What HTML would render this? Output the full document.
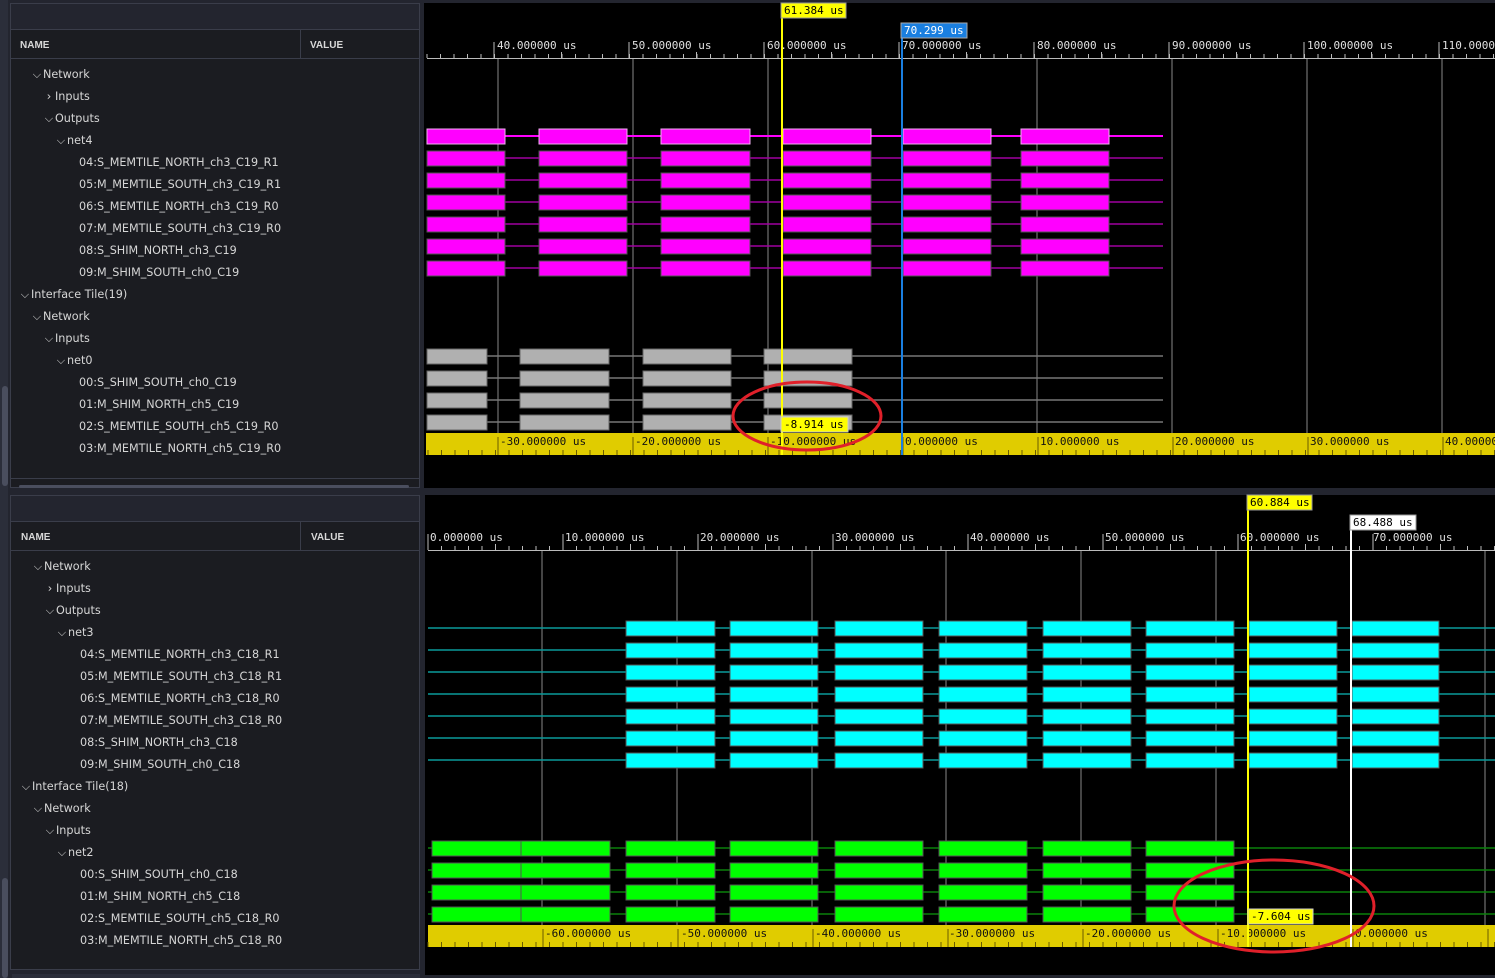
<!DOCTYPE html>
<html><head><meta charset="utf-8"><style>
body{margin:0;width:1495px;height:978px;background:#23252f;overflow:hidden;position:relative;font-family:"Liberation Sans","DejaVu Sans",sans-serif}
.lp{position:absolute;left:10px;width:410px;background:#1b1c21;border:1px solid #3a3d4a;box-sizing:border-box}
.hdr{position:absolute;left:10px;width:410px;height:30px;background:#1b1c21;border:1px solid #3a3d4a;box-sizing:border-box;font-size:10px;color:#d8d8d8;font-weight:bold}
.hdr span{position:absolute;top:10px}
.hdr i{position:absolute;left:289px;top:0;bottom:0;border-left:1px solid #3a3d4a}
.t{position:absolute;font-size:11.2px;color:#d6d6d6;white-space:nowrap;font-family:"DejaVu Sans",sans-serif;margin-top:1px}
.t b{display:inline-block;width:12px;font-weight:normal;text-align:center}
.sb{position:absolute;left:2px;width:6px;background:#4a4e5e;border-radius:3px}
svg{position:absolute;left:0;top:0}
svg text{font-family:"DejaVu Sans Mono","Liberation Mono",monospace;font-size:11px}
</style></head><body>
<div style="position:absolute;left:0;top:0;width:8px;height:978px;background:#2b2e3a"></div>
<div class="sb" style="top:386px;height:100px"></div>
<div class="sb" style="top:878px;height:100px"></div>
<div style="position:absolute;left:10px;top:3px;width:410px;height:27px;background:#23252f;border:1px solid #3a3d4a;box-sizing:border-box"></div>
<div class="hdr" style="top:29px"><span style="left:9px">NAME</span><i></i><span style="left:299px">VALUE</span></div>
<div class="lp" style="top:59px;height:420px;border-top:none"></div>
<div style="position:absolute;left:10px;top:478px;width:410px;height:10px;background:#1b1c21;border:1px solid #3a3d4a;box-sizing:border-box"></div>
<div style="position:absolute;left:19px;top:485px;width:390px;height:3px;background:#4a4e5e;border-radius:2px"></div>
<div style="position:absolute;left:10px;top:495px;width:410px;height:27px;background:#23252f;border:1px solid #3a3d4a;box-sizing:border-box"></div>
<div class="hdr" style="top:521px"><span style="left:10px">NAME</span><i></i><span style="left:300px">VALUE</span></div>
<div class="lp" style="top:551px;height:419px;border-top:none"></div>
<div style="position:absolute;left:12px;top:974px;width:408px;height:4px;background:#2b2e3a"></div>

<div class="t" style="left:31px;top:67px"><b>⌵</b>Network</div>
<div class="t" style="left:43px;top:89px"><b>›</b>Inputs</div>
<div class="t" style="left:43px;top:111px"><b>⌵</b>Outputs</div>
<div class="t" style="left:55px;top:133px"><b>⌵</b>net4</div>
<div class="t" style="left:79px;top:155px">04:S_MEMTILE_NORTH_ch3_C19_R1</div>
<div class="t" style="left:79px;top:177px">05:M_MEMTILE_SOUTH_ch3_C19_R1</div>
<div class="t" style="left:79px;top:199px">06:S_MEMTILE_NORTH_ch3_C19_R0</div>
<div class="t" style="left:79px;top:221px">07:M_MEMTILE_SOUTH_ch3_C19_R0</div>
<div class="t" style="left:79px;top:243px">08:S_SHIM_NORTH_ch3_C19</div>
<div class="t" style="left:79px;top:265px">09:M_SHIM_SOUTH_ch0_C19</div>
<div class="t" style="left:19px;top:287px"><b>⌵</b>Interface Tile(19)</div>
<div class="t" style="left:31px;top:309px"><b>⌵</b>Network</div>
<div class="t" style="left:43px;top:331px"><b>⌵</b>Inputs</div>
<div class="t" style="left:55px;top:353px"><b>⌵</b>net0</div>
<div class="t" style="left:79px;top:375px">00:S_SHIM_SOUTH_ch0_C19</div>
<div class="t" style="left:79px;top:397px">01:M_SHIM_NORTH_ch5_C19</div>
<div class="t" style="left:79px;top:419px">02:S_MEMTILE_SOUTH_ch5_C19_R0</div>
<div class="t" style="left:79px;top:441px">03:M_MEMTILE_NORTH_ch5_C19_R0</div>

<div class="t" style="left:32px;top:559px"><b>⌵</b>Network</div>
<div class="t" style="left:44px;top:581px"><b>›</b>Inputs</div>
<div class="t" style="left:44px;top:603px"><b>⌵</b>Outputs</div>
<div class="t" style="left:56px;top:625px"><b>⌵</b>net3</div>
<div class="t" style="left:80px;top:647px">04:S_MEMTILE_NORTH_ch3_C18_R1</div>
<div class="t" style="left:80px;top:669px">05:M_MEMTILE_SOUTH_ch3_C18_R1</div>
<div class="t" style="left:80px;top:691px">06:S_MEMTILE_NORTH_ch3_C18_R0</div>
<div class="t" style="left:80px;top:713px">07:M_MEMTILE_SOUTH_ch3_C18_R0</div>
<div class="t" style="left:80px;top:735px">08:S_SHIM_NORTH_ch3_C18</div>
<div class="t" style="left:80px;top:757px">09:M_SHIM_SOUTH_ch0_C18</div>
<div class="t" style="left:20px;top:779px"><b>⌵</b>Interface Tile(18)</div>
<div class="t" style="left:32px;top:801px"><b>⌵</b>Network</div>
<div class="t" style="left:44px;top:823px"><b>⌵</b>Inputs</div>
<div class="t" style="left:56px;top:845px"><b>⌵</b>net2</div>
<div class="t" style="left:80px;top:867px">00:S_SHIM_SOUTH_ch0_C18</div>
<div class="t" style="left:80px;top:889px">01:M_SHIM_NORTH_ch5_C18</div>
<div class="t" style="left:80px;top:911px">02:S_MEMTILE_SOUTH_ch5_C18_R0</div>
<div class="t" style="left:80px;top:933px">03:M_MEMTILE_NORTH_ch5_C18_R0</div>

<svg width="1495" height="978" id="s">
<rect x="424" y="3" width="1071" height="485" fill="#000"/>
<rect x="425" y="495" width="1070" height="480" fill="#000"/>
<g id="g"></g>
<g fill="#e0e0e0">
<text x="497" y="49">40.000000 us</text><text x="632" y="49">50.000000 us</text><text x="767" y="49">60.000000 us</text><text x="902" y="49">70.000000 us</text><text x="1037" y="49">80.000000 us</text><text x="1172" y="49">90.000000 us</text><text x="1307" y="49">100.000000 us</text><text x="1442" y="49">110.000000 us</text>
<text x="430" y="541">0.000000 us</text><text x="565" y="541">10.000000 us</text><text x="700" y="541">20.000000 us</text><text x="835" y="541">30.000000 us</text><text x="970" y="541">40.000000 us</text><text x="1105" y="541">50.000000 us</text><text x="1240" y="541">60.000000 us</text><text x="1373" y="541">70.000000 us</text>
</g>
<g fill="#111">
<text x="500" y="445">-30.000000 us</text><text x="635" y="445">-20.000000 us</text><text x="770" y="445">-10.000000 us</text><text x="905" y="445">0.000000 us</text><text x="1040" y="445">10.000000 us</text><text x="1175" y="445">20.000000 us</text><text x="1310" y="445">30.000000 us</text><text x="1445" y="445">40.000000 us</text>
<text x="545" y="937">-60.000000 us</text><text x="681" y="937">-50.000000 us</text><text x="815" y="937">-40.000000 us</text><text x="949" y="937">-30.000000 us</text><text x="1085" y="937">-20.000000 us</text><text x="1220" y="937">-10.000000 us</text><text x="1355" y="937">0.000000 us</text>
</g>
<g id="m"></g>
<rect x="781" y="3" width="65" height="15" fill="#ff0" stroke="#999"/><text x="784" y="14" fill="#000">61.384 us</text>
<rect x="901" y="23" width="66" height="15" fill="#1a7fe0" stroke="#aaa"/><text x="904" y="34" fill="#fff">70.299 us</text>
<rect x="781" y="417" width="67" height="15" fill="#ff0" stroke="#ccc"/><text x="784" y="428" fill="#000">-8.914 us</text>
<rect x="1247" y="495" width="65" height="15" fill="#ff0" stroke="#999"/><text x="1250" y="506" fill="#000">60.884 us</text>
<rect x="1350" y="515" width="66" height="15" fill="#fff" stroke="#999"/><text x="1353" y="526" fill="#000">68.488 us</text>
<rect x="1248" y="909" width="65" height="15" fill="#ff0" stroke="#ccc"/><text x="1251" y="920" fill="#000">-7.604 us</text>
<ellipse cx="807" cy="416" rx="74" ry="34" fill="none" stroke="#e0202a" stroke-width="3"/>
<ellipse cx="1274" cy="906" rx="100" ry="46" fill="none" stroke="#e0202a" stroke-width="3"/>
</svg>
<script>
var g=document.getElementById('g'),h='';
function r(x,y,w,ht,f,s){h+='<rect x="'+x+'" y="'+y+'" width="'+w+'" height="'+ht+'" fill="'+f+'"'+(s?' stroke="'+s+'"':'')+'/>';}
function l(x1,y1,x2,y2,c,w){h+='<line x1="'+x1+'" y1="'+y1+'" x2="'+x2+'" y2="'+y2+'" stroke="'+c+'" stroke-width="'+(w||1)+'"/>';}
l(427,58.5,1495,58.5,'#bbb');for(var x=427;x<1495;x+=13.5)l(x,54,x,58,'#bbb');for(var x=494;x<1495;x+=135){l(x,42,x,58,'#bbb');l(x+67.5,52,x+67.5,58,'#bbb');}
l(428,550.5,1495,550.5,'#bbb');for(var x=428;x<1495;x+=13.5)l(x,546,x,550,'#bbb');for(var x=428;x<1495;x+=135){l(x,534,x,550,'#bbb');l(x+67.5,544,x+67.5,550,'#bbb');}
r(426,433,1069,22,'#e0cc00');r(428,925,1067,22,'#e0cc00');
for(var x=428;x<1495;x+=13.5){l(x,450,x,455,'#6a5d00');l(x,942,x,947,'#6a5d00');}
for(var x=498;x<1495;x+=135)l(x,437,x,455,'#6a5d00');for(var x=543;x<1495;x+=135)l(x,929,x,947,'#6a5d00');
[498,633,768,1037,1172,1307,1442].forEach(function(x){l(x,59,x,433,'#888')});
[542,677,812,946,1081,1216,1485].forEach(function(x){l(x,551,x,925,'#888')});
var mb=[[427,505],[539,627],[661,750],[783,871],[903,991],[1021,1109]];
for(var i=0;i<7;i++){var y=136+22*i;l(427,y,1163,y,i==0?'#ff00ff':'#a000a0',i==0?2:1.5);mb.forEach(function(b){r(b[0],y-7,b[1]-b[0],15,'#ff00ff',i==0?'#f0b0f0':'#555')});}
var gb=[[427,487],[520,609],[643,731],[764,852]];
for(var i=0;i<4;i++){var y=356+22*i;l(427,y,1163,y,'#777',1.5);gb.forEach(function(b){r(b[0],y-7,b[1]-b[0],15,'#b0b0b0','#666')});}
var cb=[[626,715],[730,818],[835,923],[939,1027],[1043,1131],[1146,1234],[1249,1337],[1352,1439]];
for(var i=0;i<7;i++){var y=628+22*i;l(428,y,1495,y,'#0a9a9a',1.5);cb.forEach(function(b){r(b[0],y-7,b[1]-b[0],15,'#00ffff','#555')});}
var grb=[[432,521],[521,610],[626,715],[730,818],[835,923],[939,1027],[1043,1131],[1146,1234]];
for(var i=0;i<4;i++){var y=848+22*i;l(428,y,1495,y,'#0a800a',1.5);grb.forEach(function(b){r(b[0],y-7,b[1]-b[0],15,'#00ff00','#555')});}
g.innerHTML=h;h='';
l(782,18,782,455,'#ffff00',2);l(902,38,902,455,'#1a7fe0',2);l(1248,510,1248,947,'#ffff00',2);l(1351,530,1351,947,'#fff',2);
document.getElementById('m').innerHTML=h;
</script>
</body></html>
